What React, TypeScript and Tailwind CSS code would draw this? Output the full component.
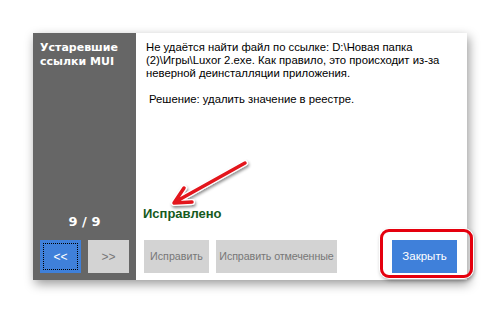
export default function App() {
  return (
    <div className="relative w-[500px] h-[313px] bg-white overflow-hidden pl-[33px] pt-[33px] font-['Liberation_Sans','DejaVu_Sans',sans-serif]">
      {/* Dialog */}
      <div className="flex w-[434px] h-[247px] bg-white shadow-[2px_4px_10px_rgba(0,0,0,0.4)]">
        {/* Sidebar */}
        <div className="flex flex-col w-[103px] bg-[#666666] px-[7px] pb-[7px]">
          <div className="pt-[8px] font-['DejaVu_Sans',sans-serif] text-[11px] leading-[14px] font-bold text-white">
            Устаревшие
            <br />
            ссылки MUI
          </div>
          <div className="mt-auto mb-[9px] text-center font-['DejaVu_Sans',sans-serif] text-[13px] font-bold text-white">
            9 / 9
          </div>
          <div className="flex gap-[7px]">
            <button className="relative w-[41px] h-[33px] bg-[#3f80da] text-white text-[12px]">
              <span className="absolute inset-[3px] border border-dotted border-black" />
              &lt;&lt;
            </button>
            <button className="w-[41px] h-[33px] bg-[#d3d3d3] text-[#777] text-[12px]">&gt;&gt;</button>
          </div>
        </div>

        {/* Main */}
        <div className="flex flex-col flex-1 pl-[10px] pr-[10px] pt-[8px] pb-[7px]">
          <div className="text-[11.3px] leading-[13px] text-black">
            <p>
              Не удаётся найти файл по ссылке: D:\Новая папка (2)\Игры\Luxor 2.exe. Как правило, это происходит из-за
              неверной деинсталляции приложения.
            </p>
            <p className="mt-[13px] pl-[3px]">Решение: удалить значение в реестре.</p>
          </div>
          <div className="mt-auto mb-[17px] -ml-[3px] text-[13px] font-bold text-[#155a1c]">Исправлено</div>
          <div className="flex items-end">
            <button className="h-[33px] w-[65px] -ml-[2px] bg-[#d3d3d3] text-[#777] text-[10.7px] whitespace-nowrap">
              Исправить
            </button>
            <button className="ml-[7px] h-[33px] w-[121px] bg-[#d3d3d3] text-[#777] text-[10.7px] tracking-[-0.1px] whitespace-nowrap">
              Исправить отмеченные
            </button>
            <button className="ml-auto h-[33px] w-[65px] bg-[#3f80da] text-white text-[11.5px] whitespace-nowrap">
              Закрыть
            </button>
          </div>
        </div>
      </div>

      {/* Red highlight around the close button */}
      <div className="absolute left-[380px] top-[229px] w-[93px] h-[49px] rounded-[9px] border-[3px] border-[#e5000e] ring-1 ring-white shadow-[1px_2px_4px_rgba(0,0,0,0.45)]" />

      {/* Red arrow */}
      <svg className="absolute left-0 top-0" width="500" height="313" viewBox="0 0 500 313">
        <defs>
          <filter id="sh" x="-20%" y="-20%" width="140%" height="140%">
            <feDropShadow dx="1" dy="2" stdDeviation="1.5" floodColor="#000" floodOpacity="0.45" />
          </filter>
        </defs>
        <g filter="url(#sh)" strokeLinecap="round" strokeLinejoin="round" fill="none">
          <path d="M245 163 L175 202 M184 188 L174 203 L192 202" stroke="#fff" strokeWidth="6" />
          <path d="M245 163 L175 202 M184 188 L174 203 L192 202" stroke="#e3141b" strokeWidth="3.5" />
        </g>
      </svg>
    </div>
  );
}
